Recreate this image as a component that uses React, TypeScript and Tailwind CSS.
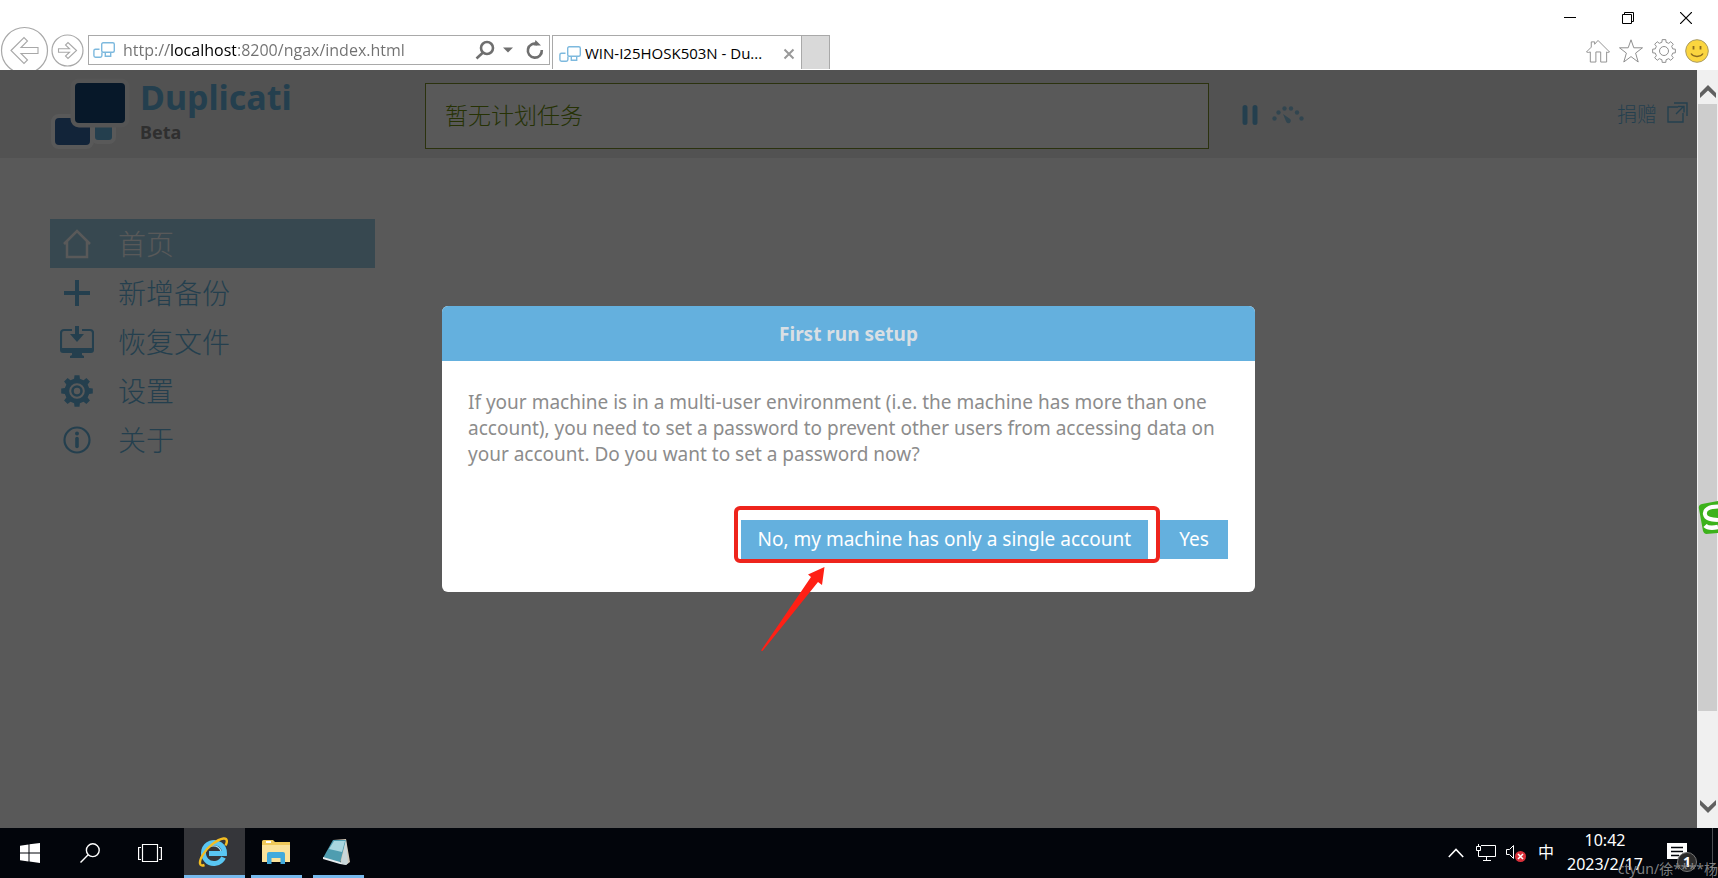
import { useState } from "react";
import type { ReactNode } from "react";

type MenuItem = {
  id: string;
  label: string;
  icon: ReactNode;
};

const gearPath = (teeth: number, outer: number, inner: number) => {
  const step = (Math.PI * 2) / teeth;
  const points: string[] = [];
  for (let i = 0; i < teeth; i++) {
    const a = i * step - Math.PI / 2;
    [
      [inner, -0.3],
      [outer, -0.2],
      [outer, 0.2],
      [inner, 0.3],
    ].forEach(([r, k]) => {
      points.push(
        `${(Math.cos(a + k * step) * r).toFixed(2)} ${(Math.sin(a + k * step) * r).toFixed(2)}`
      );
    });
  }
  return `M${points.join("L")}Z`;
};

const menuItems: MenuItem[] = [
  {
    id: "home",
    label: "首页",
    icon: (
      <svg viewBox="0 0 34 34" className="size-[34px]" fill="none" stroke="currentColor" strokeWidth="2.5">
        <path d="M4 17 17 4l13 13M7 14v16h20V14" />
      </svg>
    ),
  },
  {
    id: "add",
    label: "新增备份",
    icon: (
      <svg viewBox="0 0 34 34" className="size-[34px]" fill="none" stroke="currentColor" strokeWidth="4">
        <path d="M4 17h26M17 4v26" />
      </svg>
    ),
  },
  {
    id: "restore",
    label: "恢复文件",
    icon: (
      <svg viewBox="0 0 34 34" className="size-[34px]">
        <path
          d="M12 5H4a3 3 0 0 0-3 3v16h32V8a3 3 0 0 0-3-3h-8"
          fill="none"
          stroke="currentColor"
          strokeWidth="2.2"
        />
        <path
          fill="currentColor"
          d="M0 23h34v2a3 3 0 0 1-3 3h-9v2l2 1v2H10v-2l2-1v-2H3a3 3 0 0 1-3-3zM15 1h4v8h5l-7 8-7-8h5z"
        />
      </svg>
    ),
  },
  {
    id: "settings",
    label: "设置",
    icon: (
      <svg viewBox="-17 -17 34 34" className="size-[34px]">
        <path d={gearPath(8, 16, 12.5)} fill="currentColor" />
        <circle r="6.8" fill="currentColor" stroke="#fff" strokeWidth="2" />
        <circle r="3.2" fill="#fff" />
      </svg>
    ),
  },
  {
    id: "about",
    label: "关于",
    icon: (
      <svg viewBox="0 0 34 34" className="size-[34px]">
        <circle cx="17" cy="17" r="12.5" fill="none" stroke="currentColor" strokeWidth="2.2" />
        <circle cx="17" cy="10.5" r="2" fill="currentColor" />
        <path d="M17 15.5v8" stroke="currentColor" strokeWidth="3.6" strokeLinecap="round" />
      </svg>
    ),
  },
];

function Favicon() {
  return (
    <svg viewBox="0 0 22 16" className="h-4 w-[22px] shrink-0" fill="none" stroke="#7db9de" strokeWidth="1.4">
      <rect x="8.7" y="0.7" width="12.6" height="9.6" rx="1.5" />
      <path d="M6.5 7.2h-4a1.6 1.6 0 0 0-1.6 1.6v4.8a1.6 1.6 0 0 0 1.6 1.6h4.8a1.6 1.6 0 0 0 1.6-1.6v-3M12.3 11v3.3h5.4V11" />
    </svg>
  );
}

function BrowserBar() {
  const [url, setUrl] = useState("http://localhost:8200/ngax/index.html");

  return (
    <header className="flex h-[70px] shrink-0 items-start overflow-hidden bg-white font-['Open_Sans',sans-serif]">
      <button aria-label="Back" className="mt-[26px] shrink-0">
        <svg viewBox="0 0 49 49" className="size-[49px]" fill="none" stroke="#a8a8a8">
          <circle cx="24.5" cy="24.5" r="23" strokeWidth="1.2" />
          <path d="M11 24.5 24 11.5l3.500 3.500-6.500 6.500H38v6H21l6.500 6.500-3.500 3.500z" strokeWidth="1.1" />
        </svg>
      </button>
      <button aria-label="Forward" className="ml-0.5 mt-[34px] shrink-0">
        <svg viewBox="0 0 33 33" className="size-[33px]" fill="none" stroke="#a8a8a8">
          <circle cx="16.5" cy="16.5" r="15.5" strokeWidth="1.2" />
          <path d="M25.5 16.5 17 8.5l-2.500 2.500 4 3.800H7.500v3.400h11l-4 3.800L17 24.500z" strokeWidth="1.1" />
        </svg>
      </button>

      <form
        className="ml-1 mt-[35px] flex h-[30px] w-[462px] items-center border border-[#a9a9a9] pl-1"
        onSubmit={(e) => e.preventDefault()}
      >
        <Favicon />
        <input
          aria-label="Address"
          value={url}
          onChange={(e) => setUrl(e.target.value)}
          className="ml-2 min-w-0 flex-1 bg-[linear-gradient(to_right,#707070_46px,#000_46px,#000_113px,#707070_113px)] bg-clip-text text-base leading-7 text-transparent outline-none"
        />
        <button aria-label="Search">
          <svg viewBox="0 0 20 20" className="size-5" fill="none" stroke="#6f6f6f" strokeWidth="2.6">
            <circle cx="12" cy="8" r="6" />
            <path d="m8 12.500-6.500 6" />
          </svg>
        </button>
        <button aria-label="Address history" className="ml-2">
          <svg viewBox="0 0 10 6" className="h-1.5 w-2.5" fill="#6f6f6f">
            <path d="M0 0.500h10L5 5.500z" />
          </svg>
        </button>
        <button aria-label="Refresh" className="ml-3 mr-1">
          <svg viewBox="0 0 20 20" className="size-5">
            <path d="M12.5 4.200A7 7 0 1 0 16.800 10" fill="none" stroke="#6f6f6f" strokeWidth="2.6" />
            <path d="M10.500 0 16 5.500h-7z" fill="#6f6f6f" />
          </svg>
        </button>
      </form>

      <div className="ml-0.5 mt-[35px] flex h-[34px] w-[250px] items-center gap-1 border border-b-0 border-[#a9a9a9] pl-1.5 pt-0.5">
        <Favicon />
        <a href="#tab" className="flex-1 whitespace-nowrap text-[15px] text-black">
          WIN-I25HOSK503N - Du...
        </a>
        <button aria-label="Close tab" className="mr-1.5">
          <svg viewBox="0 0 12 12" className="size-3" stroke="#999" strokeWidth="2">
            <path d="m1.500 1.500 9 9m0-9-9 9" />
          </svg>
        </button>
      </div>
      <button
        aria-label="New tab"
        className="mt-[35px] h-[34px] w-7 border border-b-0 border-l-0 border-[#a9a9a9] bg-[#d9d9d9]"
      />

      <div className="ml-auto flex h-full flex-col">
        <div className="flex h-9 justify-end pr-[3px] text-black">
          <button aria-label="Minimize" className="flex w-[58px] items-center justify-center">
            <svg viewBox="0 0 12 12" className="size-3" stroke="currentColor">
              <path d="M0 5.500h12" />
            </svg>
          </button>
          <button aria-label="Restore" className="flex w-[58px] items-center justify-center">
            <svg viewBox="0 0 12 12" className="size-3" fill="none" stroke="currentColor">
              <path d="M0.500 2.500h9v9h-9zM2.500 2.500v-2h9v9h-2" />
            </svg>
          </button>
          <button aria-label="Close" className="flex w-[58px] items-center justify-center">
            <svg viewBox="0 0 12 12" className="size-3" stroke="currentColor" strokeWidth="1.2">
              <path d="m0 0 12 12M12 0 0 12" />
            </svg>
          </button>
        </div>
        <div className="flex justify-end gap-[9px] pr-[9px] pt-[3px]">
          <button aria-label="Home">
            <svg viewBox="0 0 25 24" className="size-6" fill="none" stroke="#8f8f8f">
              <path d="M0.500 13 5.500 8V2.500H9V5l3.500-4L24.500 13l-2 .5-1-.5v10.500h-6.200V13h-5v10.500H4.500V13l-2 .5z" />
            </svg>
          </button>
          <button aria-label="Favorites">
            <svg viewBox="0 0 24 24" className="size-6" fill="none" stroke="#8f8f8f">
              <path d="m12 .800 2.800 8h8.700l-6.900 5.300 2.600 8.900-7.200-5.400L4.800 23l2.600-8.900L.500 8.800h8.700z" />
            </svg>
          </button>
          <button aria-label="Tools">
            <svg viewBox="-12 -12 24 24" className="size-6" fill="none" stroke="#8f8f8f">
              <path d={gearPath(8, 11.5, 9)} />
              <circle r="4.5" />
            </svg>
          </button>
          <button aria-label="Feedback">
            <svg viewBox="0 0 24 24" className="size-6">
              <circle cx="12" cy="12" r="11.3" fill="#fbd53f" stroke="#a99a62" />
              <path d="M8.500 7v3.500M15.500 7v3.500" stroke="#8a6a1f" strokeWidth="1.8" />
              <path d="M6 14.500c2.500 4 9.500 4 12 0" fill="none" stroke="#8a6a1f" strokeWidth="1.4" />
            </svg>
          </button>
        </div>
      </div>
    </header>
  );
}

function AppHeader() {
  return (
    <div className="flex h-22 items-start bg-[#ebebeb]">
      <div className="flex w-[425px] shrink-0 items-start pl-[50px] pt-2">
        <svg viewBox="0 0 80 72" className="h-[72px] w-20">
          <g stroke="#fff" strokeWidth="8" strokeLinejoin="round">
            <rect x="25" y="5" width="50" height="40" rx="4" />
            <rect x="5" y="40" width="35" height="27" rx="4" />
            <rect x="45" y="45" width="17" height="17" rx="3" />
          </g>
          <rect x="5" y="40" width="35" height="27" rx="4" fill="#3667a3" />
          <rect x="45" y="45" width="17" height="17" rx="3" fill="#67b6e0" />
          <rect x="25" y="5" width="50" height="40" rx="4" fill="#144575" stroke="#f2f2f2" strokeWidth="9" paintOrder="stroke" />
        </svg>
        <div className="pl-2.5 font-bold">
          <h1 className="text-[34px] leading-[38px] text-[#67b6e0]">Duplicati</h1>
          <p className="mt-0.5 text-lg leading-7 text-[#888]">Beta</p>
        </div>
      </div>

      <div className="mt-[13px] flex h-[66px] flex-1 items-center border border-[#7d8f2a] bg-white pb-0.5 pl-[19px] text-[23px] font-light text-[#6d8f0e]">
        暂无计划任务
      </div>

      <div className="flex w-[488px] shrink-0 items-center pl-[33px] pr-[9px] pt-[31px] text-[#67b6e0]">
        <button aria-label="Pause">
          <svg viewBox="0 0 16 22" className="h-[22px] w-4" stroke="currentColor" strokeWidth="5" strokeLinecap="round">
            <path d="M3 3.500v15M13 3.500v15" />
          </svg>
        </button>
        <button aria-label="Throttle" className="ml-3.5">
          <svg viewBox="0 0 32 22" className="h-[22px] w-8 opacity-70" fill="currentColor">
            <circle cx="2.5" cy="14.5" r="2.2" />
            <circle cx="6.5" cy="8.500" r="2.2" />
            <circle cx="12.5" cy="4.500" r="2.2" />
            <circle cx="19" cy="4.500" r="2.200" />
            <circle cx="25" cy="8.500" r="2.200" />
            <circle cx="29.500" cy="14.500" r="2.200" />
            <path d="m11 10 6.500 4.500a2.500 2.500 0 1 1-3.500 3z" />
          </svg>
        </button>
        <a href="#donate" className="ml-auto flex items-center gap-2.5 text-xl leading-7 font-light">
          捐赠
          <svg viewBox="0 0 21 21" className="mb-1.5 size-[21px]" fill="none" stroke="currentColor" strokeWidth="1.400">
            <path d="M11 5H1v15h15v-9M7 1h13v13M9 12l8-8M11 4.500h6v6" />
          </svg>
        </a>
      </div>
    </div>
  );
}

function SideMenu() {
  const [active, setActive] = useState("home");

  return (
    <nav className="mt-[61px] ml-[50px] w-[325px]">
      <ul>
        {menuItems.map((item) => (
          <li key={item.id}>
            <a
              href={`#${item.id}`}
              onClick={() => setActive(item.id)}
              className={`flex h-[49px] items-center gap-6 pl-2.5 text-[28px] leading-9 font-light ${
                active === item.id ? "bg-[#9dcee5] text-white" : "text-[#67b6e0]"
              }`}
            >
              {item.icon}
              {item.label}
            </a>
          </li>
        ))}
      </ul>
    </nav>
  );
}

function SetupDialog() {
  return (
    <div className="absolute inset-0 flex items-center justify-center bg-black/65">
      <div role="dialog" aria-labelledby="setup-title" className="w-[813px] rounded-md bg-white">
        <h2
          id="setup-title"
          className="rounded-t-md bg-[#64b0de] pt-[15px] pb-[13px] text-center text-[19px] leading-[27px] font-bold text-[#d9dfe4]"
        >
          First run setup
        </h2>
        <p className="px-[26px] pt-7 text-[19px] leading-[26px] text-[#8c8c8c]">
          If your machine is in a multi-user environment (i.e. the machine has more than one account), you need to set
          a password to prevent other users from accessing data on your account. Do you want to set a password now?
        </p>
        <div className="flex justify-end gap-3 px-[27px] pt-[53px] pb-[33px] text-[19px] text-white">
          <div className="relative">
            <button className="h-[39px] min-w-[68px] bg-[#64b0de] px-[17px]">
              No, my machine has only a single account
            </button>
            <div className="pointer-events-none absolute -top-3.5 -right-3 -bottom-1 -left-[7px] rounded-md border-4 border-[#ee241c]" />
            <svg viewBox="0 0 64 84" className="pointer-events-none absolute top-[47px] left-5 h-[84px] w-16">
              <path d="M0 83.500 50 10 47 7.500 63.500 0 61 18 57 15 1.500 84z" fill="#ff2015" />
            </svg>
          </div>
          <button className="h-[39px] min-w-[68px] bg-[#64b0de] px-[17px]">Yes</button>
        </div>
      </div>
    </div>
  );
}

function PageScrollbar() {
  return (
    <div className="relative flex w-[21px] shrink-0 flex-col bg-[#f0f0f0]">
      <button aria-label="Scroll up" className="flex h-[34px] items-center justify-center pt-2">
        <svg viewBox="0 0 16 13" className="h-[13px] w-4" fill="#606060">
          <path d="M8 0 16 8v5L8 5.500 0 13V8z" />
        </svg>
      </button>
      <div className="mx-px flex-1">
        <div className="h-[88%] bg-[#cdcdcd]" />
      </div>
      <button aria-label="Scroll down" className="flex h-[34px] items-center justify-center pb-2.5">
        <svg viewBox="0 0 16 13" className="h-[13px] w-4" fill="#606060">
          <path d="M8 13 0 5V0l8 7.500L16 0v5z" />
        </svg>
      </button>
      <svg viewBox="0 0 20 34" className="absolute top-[431px] right-0 h-[34px] w-5">
        <path d="M1 8Q0 4 4 3L20 0v32L8 33q-2 0-3-3z" fill="#3cb21b" />
        <path d="M20 5.500c-9 0-14 3-13 8 .7 4 5 5 13 5.500" fill="none" stroke="#fff" strokeWidth="4" />
        <path d="M7 24.500c3 3 8 2.500 13 1.500" fill="none" stroke="#fff" strokeWidth="4.500" />
      </svg>
    </div>
  );
}

function Taskbar() {
  return (
    <footer className="relative flex h-[50px] shrink-0 bg-[#02050b] text-white">
      <button aria-label="Start" className="flex w-15 items-center justify-center">
        <svg viewBox="0 0 20 20" className="size-5" fill="currentColor">
          <path d="M0 2.800 8.500 1.500v8H0zM9.500 1.300 20 0v9.500H9.500zM0 10.500h8.500v8L0 17.200zM9.500 10.500H20V20L9.500 18.600z" />
        </svg>
      </button>
      <button aria-label="Search" className="flex w-15 items-center justify-center">
        <svg viewBox="0 0 20 20" className="size-5" fill="none" stroke="currentColor" strokeWidth="1.4">
          <circle cx="12.8" cy="7.2" r="6.4" />
          <path d="M8.200 11.800.500 19.500" />
        </svg>
      </button>
      <button aria-label="Task view" className="flex w-15 items-center justify-center">
        <svg viewBox="0 0 24 20" className="h-5 w-6" fill="none" stroke="currentColor" strokeWidth="1.2">
          <path d="M4.500 1.500h15v17h-15zM3 4.500H.600v12H3M21 4.500h2.400v12H21" />
        </svg>
      </button>

      <button
        aria-label="Internet Explorer"
        className="ml-1 flex w-[61px] items-center justify-center border-b-[3px] border-[#76b9ed] bg-[#35363a]"
      >
        <svg viewBox="0 0 30 30" className="mr-1 size-[30px]">
          <path
            d="M25.500 20.500A10.500 10.500 0 1 1 26.500 16.500H11"
            fill="none"
            stroke="#59c6f2"
            strokeWidth="5"
          />
          <path d="M8 14a8 8 0 0 1 15 0" fill="none" stroke="#a5e4fb" strokeWidth="1.2" />
          <path
            d="M6.500 28C1 30 .500 25 5 17.500 10 9.500 19 2.500 25.500 1.500c4-.5 4 3.500 2 7"
            fill="none"
            stroke="#f3bd22"
            strokeWidth="2.4"
          />
        </svg>
      </button>
      <button
        aria-label="File Explorer"
        className="ml-1.5 flex w-[51px] items-center justify-center border-b-[3px] border-[#76b9ed]"
      >
        <svg viewBox="0 0 28 24" className="mr-px h-6 w-7">
          <path d="M0 1.500Q0 0 1.500 0H11l2 2h15v20H0z" fill="#f0c95a" />
          <path d="M0 5h28v17H0z" fill="#fbe29a" />
          <path d="M4 1h5v2H4z" fill="#fff" />
          <path d="M5 24V14q0-2 2-2h14q2 0 2 2v10h-4.500v-6h-9v6z" fill="#41aadc" />
        </svg>
      </button>
      <button
        aria-label="Notepad"
        className="ml-[11px] flex w-[51px] items-center justify-center border-b-[3px] border-[#76b9ed]"
      >
        <svg viewBox="0 0 28 26" className="mr-1 h-[26px] w-7">
          <path d="m10 1 13-1 4 23-4 3-5-2z" fill="#d3c9b8" />
          <path d="M10 1h13l-6 23L0 19z" fill="#4f9db0" />
          <path d="M11 2h11l-3 11L6 10z" fill="#a9d6df" />
          <path d="m0 18 17 5 6 3-6-1L0 20z" fill="#e8eef0" />
          <path d="m23 1 2 23-2 2-5-2z" fill="#c9d7da" />
        </svg>
      </button>

      <div className="ml-auto flex">
        <button aria-label="Show hidden icons" className="flex w-[30px] items-center justify-center">
          <svg viewBox="0 0 16 10" className="h-2.5 w-4" fill="none" stroke="currentColor" strokeWidth="1.6">
            <path d="m.800 9 7.200-7.500L15.200 9" />
          </svg>
        </button>
        <button aria-label="Network" className="flex w-[30px] items-center justify-center">
          <svg viewBox="0 0 20 18" className="h-[18px] w-5" fill="none" stroke="currentColor">
            <path d="M5 1.500h14.500v11H2.500V7M10.500 12.500v4M7 16.500h8M.500 2.500h4v4h-4zM2.500 0v2" />
          </svg>
        </button>
        <button aria-label="Volume" className="flex w-[30px] items-center justify-center">
          <svg viewBox="0 0 20 18" className="h-[18px] w-5" fill="none" stroke="currentColor">
            <path d="M.500 5.500h3l4-4v13l-4-4h-3z" />
            <circle cx="14.5" cy="12.5" r="5.5" fill="#d9303a" stroke="none" />
            <path d="m12 10 5 5m0-5-5 5" strokeWidth="1.5" />
          </svg>
        </button>
        <button aria-label="Input method" className="w-[30px] pb-0.5 text-base">
          中
        </button>
        <button className="w-22 pb-0.5 text-center text-base leading-6">
          <span className="block">10:42</span>
          <span className="block">2023/2/17</span>
        </button>
        <button aria-label="Notifications" className="relative flex w-14 items-center justify-center">
          <svg viewBox="0 0 20 20" className="size-5">
            <path d="M0 0h20v16h-4v4l-4-4H0z" fill="#fff" />
            <path d="M4 4.500h12M4 8.500h12M4 12.500h8" stroke="#02050b" strokeWidth="1.4" />
          </svg>
          <span className="absolute top-6 right-2 flex size-5 items-center justify-center rounded-full border border-[#777] bg-[#2b2b2b] text-sm font-bold">
            1
          </span>
        </button>
        <div className="mr-[5px] ml-[7px] w-px bg-[#4a4d52]" />
      </div>

      <span className="pointer-events-none absolute right-0 bottom-0 text-sm leading-[18px] text-[#a0a0a0]/80">
        ctyun/徐****杨
      </span>
    </footer>
  );
}

export default function App() {
  return (
    <div className="flex h-screen flex-col overflow-hidden font-['Noto_Sans','Noto_Sans_CJK_SC',sans-serif]">
      <BrowserBar />
      <div className="flex min-h-0 flex-1">
        <main className="relative min-w-0 flex-1 bg-white">
          <AppHeader />
          <SideMenu />
          <SetupDialog />
        </main>
        <PageScrollbar />
      </div>
      <Taskbar />
    </div>
  );
}
